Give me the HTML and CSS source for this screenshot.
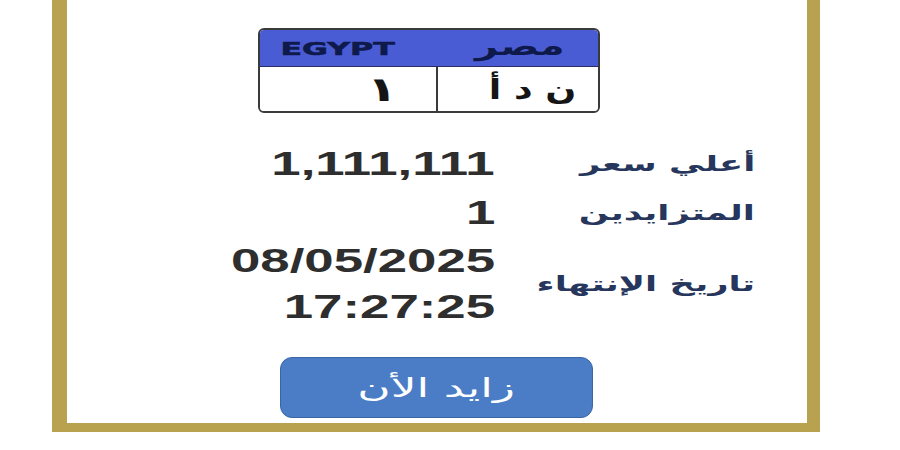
FILE: index.html
```html
<!DOCTYPE html>
<html lang="ar">
<head>
<meta charset="utf-8">
<link rel="stylesheet" href="styles.css">
</head>
<body>
<div class="frame">
  <div class="plate">
    <div class="plate-head">
      <div class="half"><span class="egypt wide">EGYPT</span></div>
      <div class="half half-ar"><span class="misr wide" dir="rtl">مصر</span></div>
    </div>
    <div class="plate-body">
      <div class="cell cell-num"><span class="num wide">١</span></div>
      <div class="cell cell-letters"><span class="letters wide" dir="rtl">ن د أ</span></div>
    </div>
  </div>

  <div class="info" dir="rtl">
    <div class="label"><span class="wide-l">أعلي سعر</span></div>
    <div class="value"><span class="wide-v">1,111,111</span></div>
    <div class="label"><span class="wide-l">المتزايدين</span></div>
    <div class="value"><span class="wide-v">1</span></div>
    <div class="label"><span class="wide-l">تاريخ الإنتهاء</span></div>
    <div class="value two"><span class="wide-v">08/05/2025</span><br><span class="wide-v">17:27:25</span></div>
  </div>

  <button class="bid"><span class="wide-b" dir="rtl">زايد الأن</span></button>
</div>
</body>
</html>
```

FILE: styles.css
```css
html, body {
  margin: 0;
  padding: 0;
  background: #ffffff;
}

.frame {
  box-sizing: border-box;
  margin-left: 52px;
  width: 768px;
  height: 432px;
  border-style: solid;
  border-color: #b8a14f;
  border-width: 0 13px 9px 15px;
  display: flex;
  flex-direction: column;
  align-items: flex-start;
}

.plate {
  box-sizing: border-box;
  margin-top: 28px;
  margin-left: 191px;
  width: 342px;
  height: 85px;
  border: 2px solid #3a3a3a;
  border-radius: 6px;
  overflow: hidden;
  display: flex;
  flex-direction: column;
}

.plate-head {
  height: 36px;
  background: #4a5cd4;
  border-bottom: 1.5px solid #2a2f60;
  display: flex;
}

.half {
  flex: 1;
  display: flex;
  align-items: center;
  justify-content: center;
}

.half-ar {
  padding-left: 26px;
}

.wide, .wide-l, .wide-v, .wide-b {
  display: inline-block;
  transform-origin: right center;
}

.egypt {
  font-family: "DejaVu Sans", sans-serif;
  font-weight: bold;
  font-size: 18px;
  color: #0f1a4c;
  transform: scaleX(1.75);
  transform-origin: center center;
  -webkit-text-stroke: 0.6px #0f1a4c;
}

.misr {
  font-family: "DejaVu Sans", sans-serif;
  font-weight: bold;
  font-size: 26px;
  color: #0f1a4c;
  transform: scaleX(1.55);
  transform-origin: center center;
  position: relative;
  top: -2px;
}

.plate-body {
  flex: 1;
  display: flex;
  background: #fff;
}

.cell {
  flex: 1;
  display: flex;
  align-items: center;
  justify-content: flex-end;
}

.cell-num {
  border-right: 2px solid #3a3a3a;
  padding-right: 38px;
}

.cell-letters {
  padding-right: 22px;
}

.num {
  font-family: "DejaVu Sans", sans-serif;
  font-weight: bold;
  font-size: 34px;
  color: #151515;
  transform: scaleX(1.5);
}

.letters {
  font-family: "DejaVu Sans", sans-serif;
  font-weight: bold;
  font-size: 28px;
  color: #151515;
  transform: scaleX(1.3);
}

.info {
  margin-top: 26px;
  align-self: flex-end;
  margin-right: 52px;
  display: grid;
  grid-template-columns: 248px 240px;
  column-gap: 12px;
  align-items: center;
}

.label {
  text-align: right;
  font-family: "DejaVu Sans", sans-serif;
  font-weight: bold;
  font-size: 21px;
  color: #26365c;
}

.wide-l {
  transform: scaleX(1.68);
}

.value {
  text-align: right;
  font-family: "Liberation Sans", Arial, sans-serif;
  font-weight: bold;
  font-size: 33px;
  line-height: 49px;
  color: #2e2e2e;
}

.value.two {
  line-height: 46px;
  padding-top: 1px;
}

.wide-v {
  transform: scaleX(1.6);
}

.bid {
  box-sizing: border-box;
  margin-top: 27px;
  margin-left: 213px;
  width: 313px;
  height: 61px;
  background: #4a7dc5;
  border: 1.5px solid #3a66a6;
  border-radius: 12px;
  display: flex;
  align-items: center;
  justify-content: center;
  padding: 0;
}

.wide-b {
  font-family: "DejaVu Sans", sans-serif;
  font-size: 26px;
  color: #ffffff;
  transform: scaleX(1.75);
  transform-origin: center center;
}
```
